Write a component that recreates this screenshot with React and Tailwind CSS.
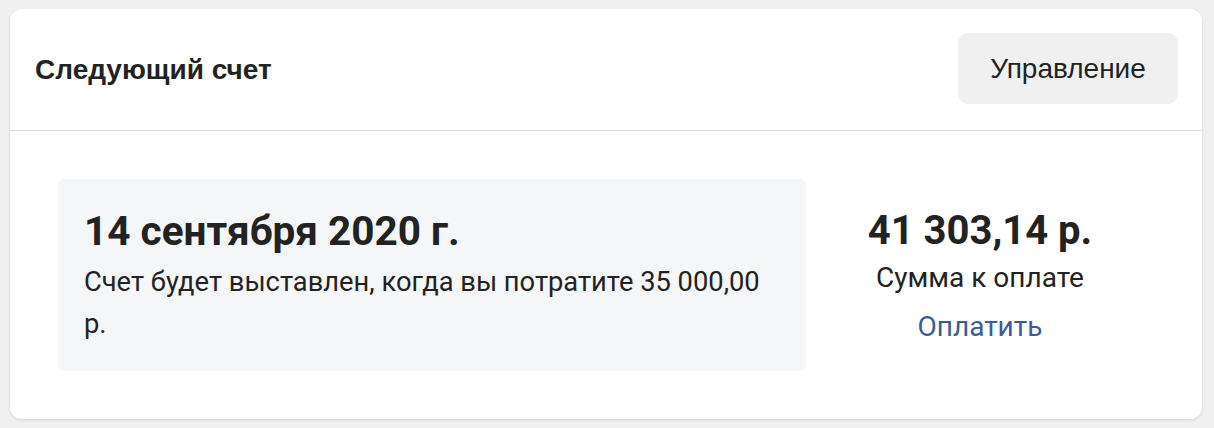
const App = () => {
  return (
    <div className="min-h-screen bg-[#f0f0f0] pl-[10px] pr-[12px] pt-[9px] pb-[10px]">
      <div className="bg-white rounded-xl shadow-[0_1px_3px_rgba(0,0,0,0.12)] overflow-hidden">

        {/* Header */}
        <div className="flex items-center justify-between pl-[25px] pr-6 pt-6 pb-[26px] border-b border-[#dcdcdc]">
          <h2 className="pt-[3px] font-['Liberation_Sans',Arial,sans-serif] font-bold text-[28px] text-[#222]">
            Следующий счет
          </h2>
          <button className="w-[220px] h-[71px] rounded-[10px] bg-[#f0f0f0] font-['Liberation_Sans',Arial,sans-serif] text-[28px] text-[#222]">
            Управление
          </button>
        </div>

        {/* Body */}
        <div className="flex px-12 pt-12 pb-[48px] font-['Roboto',sans-serif] text-[#222]">
          <div className="w-[748px] rounded-md bg-[#f5f6f8] px-[26px] pt-[28px] pb-[26px]">
            <div className="text-[40.5px] font-bold leading-[48px]">14 сентября 2020 г.</div>
            <p className="mt-[6px] text-[27.3px] leading-[42px]">
              Счет будет выставлен, когда вы потратите 35 000,00 р.
            </p>
          </div>

          <div className="flex-1 flex flex-col items-center pt-[28px]">
            <div className="text-[40px] font-bold leading-[48px]">41 303,14 р.</div>
            <div className="mt-[2px] text-[28px] leading-[42px]">Сумма к оплате</div>
            <a href="#" className="mt-[7px] text-[28px] leading-[42px] text-[#3b5b9a]">
              Оплатить
            </a>
          </div>
        </div>

      </div>
    </div>
  );
};

export default App;
